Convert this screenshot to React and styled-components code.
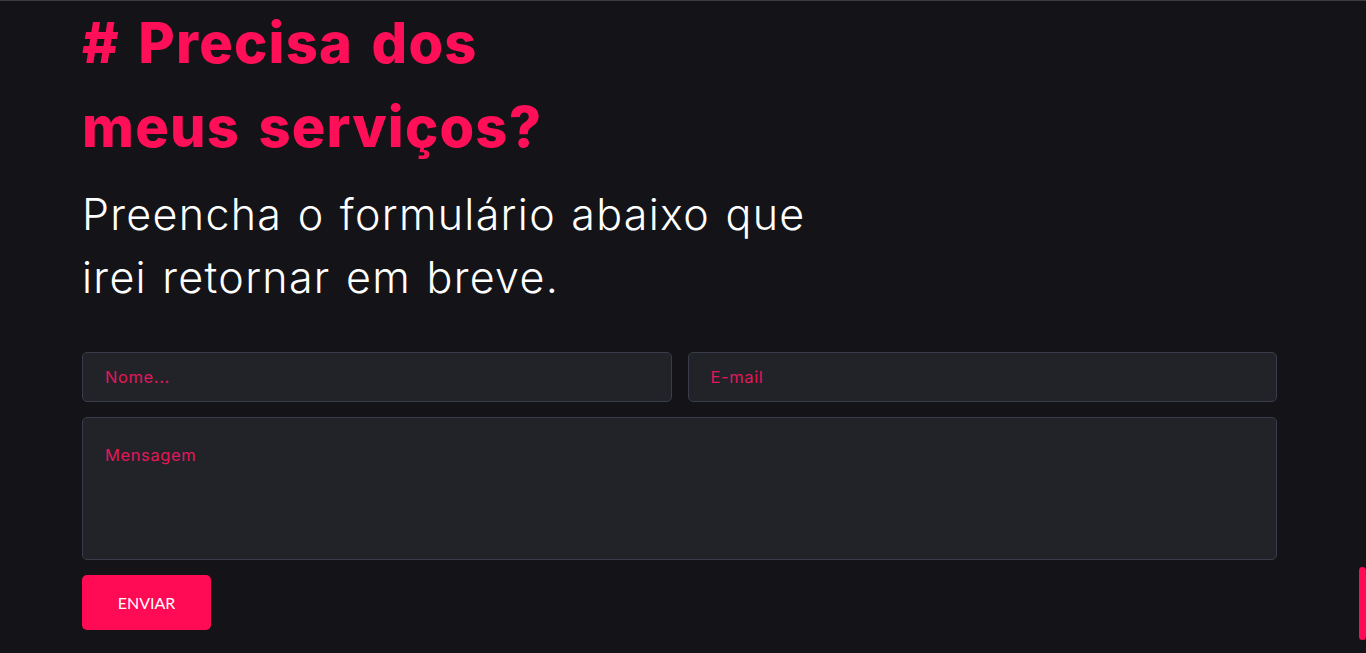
import React from 'react';
import styled, { createGlobalStyle } from 'styled-components';

const GlobalStyle = createGlobalStyle`
  html, body {
    margin: 0;
    padding: 0;
    background: #131318;
    overflow: hidden;
  }
  * {
    box-sizing: border-box;
  }
`;

const Section = styled.section`
  display: flex;
  flex-direction: column;
  width: 100%;
  height: 653px;
  border-top: 1px solid #3b3b40;
  background: #131318;
  padding-right: 7px;
  font-family: Inter, "Noto Sans", sans-serif;
`;

const Container = styled.div`
  display: flex;
  flex-direction: column;
  width: 1195px;
  margin: 0 auto;
`;

const Title = styled.h2`
  margin: 0;
  color: #ff0f57;
  font-size: 56px;
  font-weight: 800;
  line-height: 84px;
  letter-spacing: 1.2px;
  word-spacing: 5px;
  width: 560px;
`;

const Subtitle = styled.p`
  margin: 14px 0 0;
  color: #ffffff;
  font-size: 43px;
  font-weight: 300;
  line-height: 63px;
  letter-spacing: 1.3px;
  word-spacing: 2px;
  width: 770px;
`;

const Form = styled.form`
  display: flex;
  flex-direction: column;
  gap: 15px;
  margin-top: 43px;
`;

const Row = styled.div`
  display: grid;
  grid-template-columns: 1fr 1fr;
  gap: 16px;
`;

const fieldStyle = `
  width: 100%;
  background: #212329;
  border: 1px solid #383c4b;
  border-radius: 5px;
  color: #ffffff;
  font-family: Inter, "Noto Sans", sans-serif;
  font-size: 16.5px;
  letter-spacing: 0.6px;
  outline: none;
  &::placeholder {
    color: #e3175a;
    opacity: 1;
  }
`;

const Input = styled.input`
  ${fieldStyle}
  height: 50px;
  padding: 0 22px;
`;

const TextArea = styled.textarea`
  ${fieldStyle}
  height: 143px;
  padding: 27px 22px;
  resize: none;
`;

const SubmitButton = styled.button`
  width: 129px;
  height: 55px;
  border: none;
  border-radius: 5px;
  background: #ff0a54;
  color: #ffffff;
  font-family: Lato, "Noto Sans", sans-serif;
  font-size: 16px;
  font-weight: 400;
  cursor: pointer;
`;

const ScrollThumb = styled.div`
  position: fixed;
  right: 0;
  top: 567px;
  width: 7px;
  height: 73px;
  border-radius: 4px;
  background: #ff0a54;
`;

function App() {
  return (
    <>
      <GlobalStyle />
      <Section>
        <Container>
          <Title># Precisa dos meus serviços?</Title>
          <Subtitle>Preencha o formulário abaixo que irei retornar em breve.</Subtitle>
          <Form onSubmit={(e) => e.preventDefault()}>
            <Row>
              <Input type="text" placeholder="Nome..." />
              <Input type="email" placeholder="E-mail" />
            </Row>
            <TextArea placeholder="Mensagem" />
            <SubmitButton type="submit">ENVIAR</SubmitButton>
          </Form>
        </Container>
      </Section>
      <ScrollThumb />
    </>
  );
}

export default App;
